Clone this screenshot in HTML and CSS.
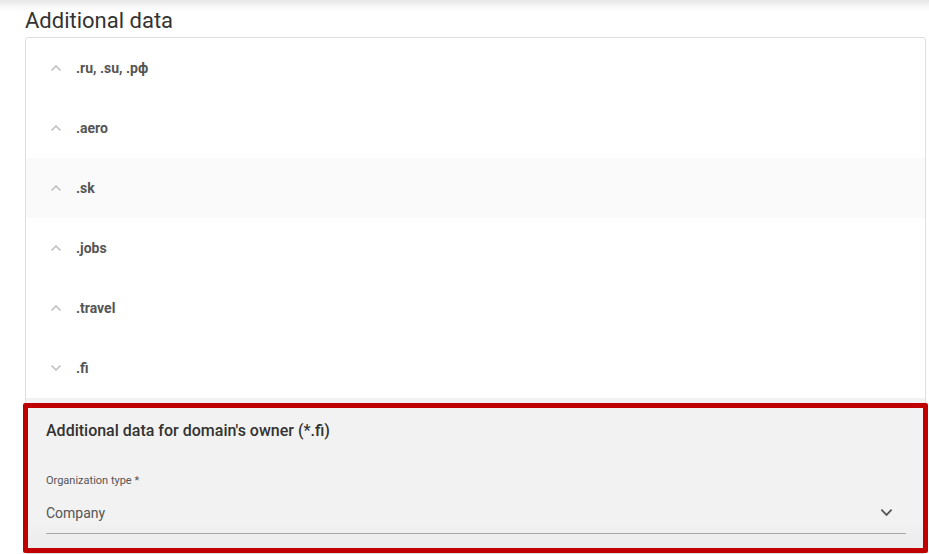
FILE: index.html
```html
<!DOCTYPE html>
<html lang="en">
<head>
<meta charset="utf-8">
<link rel="stylesheet" href="styles.css">
</head>
<body>
<main class="page">
  <h1 class="title">Additional data</h1>
  <section class="card">
    <div class="row"><svg class="chev" viewBox="0 0 12 8"><path d="M1.5 6.5 L6 2 L10.5 6.5"/></svg><span class="zone">.ru, .su, .рф</span></div>
    <div class="row"><svg class="chev" viewBox="0 0 12 8"><path d="M1.5 6.5 L6 2 L10.5 6.5"/></svg><span class="zone">.aero</span></div>
    <div class="row row-hover"><svg class="chev" viewBox="0 0 12 8"><path d="M1.5 6.5 L6 2 L10.5 6.5"/></svg><span class="zone">.sk</span></div>
    <div class="row"><svg class="chev" viewBox="0 0 12 8"><path d="M1.5 6.5 L6 2 L10.5 6.5"/></svg><span class="zone">.jobs</span></div>
    <div class="row"><svg class="chev" viewBox="0 0 12 8"><path d="M1.5 6.5 L6 2 L10.5 6.5"/></svg><span class="zone">.travel</span></div>
    <div class="row"><svg class="chev" viewBox="0 0 12 8"><path d="M1.5 1.5 L6 6 L10.5 1.5"/></svg><span class="zone">.fi</span></div>
    <div class="panel">
      <div class="highlight">
        <h2 class="panel-title">Additional data for domain's owner (*.fi)</h2>
        <div class="field">
          <label class="field-label">Organization type *</label>
          <div class="select">
            <span class="select-value">Company</span>
            <svg class="select-chev" viewBox="0 0 14 9"><path d="M1.5 1.5 L7 7 L12.5 1.5"/></svg>
          </div>
        </div>
      </div>
    </div>
  </section>
</main>
</body>
</html>
```
FILE: styles.css
```css
* { box-sizing: border-box; }
html, body { margin: 0; padding: 0; }
body {
  font-family: Roboto, "Liberation Sans", Arial, sans-serif;
  background: linear-gradient(#e6e6e6, #f7f7f7 6px, #ffffff 12px) no-repeat;
  background-color: #fff;
  width: 929px;
  height: 554px;
  overflow: hidden;
}
.page {
  padding: 8px 3px 0 25px;
}
.title {
  margin: 0;
  font-size: 22px;
  line-height: 26px;
  font-weight: 400;
  color: #333;
}
.card {
  margin-top: 3px;
  border: 1px solid #dedede;
  border-radius: 3px;
  background: #fff;
}
.row {
  height: 60px;
  display: flex;
  align-items: center;
  padding-left: 24px;
}
.row-hover { background: #fafafa; }
.chev {
  width: 12px;
  height: 8px;
  fill: none;
  stroke: #bdbdbd;
  stroke-width: 1.5;
}
.zone {
  margin-left: 14px;
  font-size: 14px;
  font-weight: 700;
  color: #555;
}
.panel {
  background: #f2f2f2;
  padding-top: 5px;
}
.highlight {
  margin: 0 -3px 0 -3px;
  border: 5px solid #c00000;
  border-radius: 2px;
  padding: 13px 17px 14px 18px;
  background: linear-gradient(#f2f2f2 80%, #ececec);
}
.panel-title {
  margin: 0;
  font-size: 16px;
  line-height: 20px;
  font-weight: 500;
  color: #333;
}
.field { margin-top: 33px; }
.field-label {
  display: block;
  font-size: 11px;
  line-height: 14px;
  color: #555;
}
.select {
  margin-top: 8px;
  height: 38px;
  border-bottom: 1px solid #a8a8a8;
  display: flex;
  align-items: center;
  justify-content: space-between;
  padding-bottom: 4px;
}
.select-value {
  font-size: 14px;
  color: #555;
}
.select-chev {
  width: 13px;
  height: 9px;
  margin-right: 13px;
  fill: none;
  stroke: #555;
  stroke-width: 2;
}
```
